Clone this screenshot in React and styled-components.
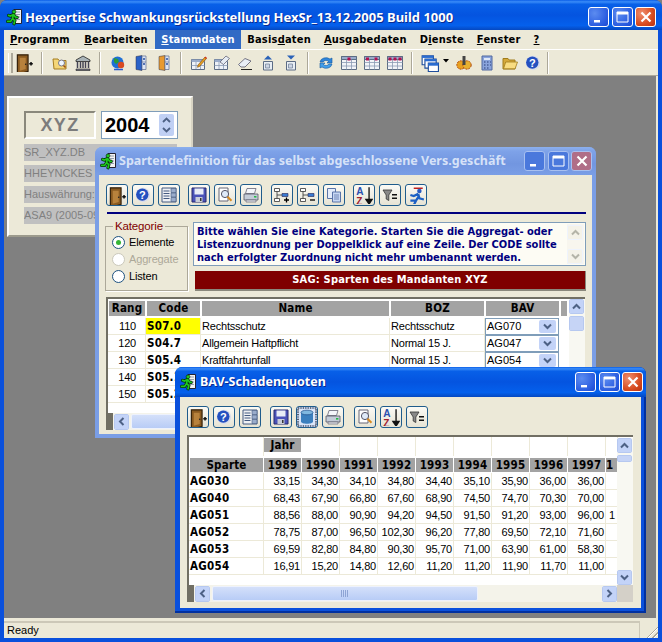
import React from "react";
import styled, { createGlobalStyle } from "styled-components";

const Global = createGlobalStyle`
  html, body { margin: 0; padding: 0; background: #808080; }
  * { box-sizing: border-box; }
`;
const UI = `"Liberation Sans", Arial, sans-serif`;
const BOLD = `"DejaVu Sans", Verdana, sans-serif`;

const Root = styled.div`
  width: 662px; height: 642px; display: flex; flex-direction: column; overflow: hidden;
  background: #0a50dc; padding: 0 4px 4px; border-radius: 7px 7px 0 0; font-family: ${UI};
`;
const TitleBar = styled.div`
  display: flex; align-items: center; flex: none; height: ${p => p.$h}px; margin: 0 ${p => p.$mx}px;
  padding: ${p => p.$pad};
  background: ${p => p.$active
    ? "linear-gradient(180deg,#0a5ee8 0,#3a8cf8 6%,#0860e8 14%,#0454e0 50%,#0460ec 85%,#0548c0 100%)"
    : "linear-gradient(180deg,#8cb0ee 0,#7ea2e8 15%,#7296e0 60%,#7a9ee6 100%)"};
  color: ${p => p.$active ? "#fff" : "#d6e2f8"};
  border-radius: 7px 7px 0 0;
`;
const TitleText = styled.span`
  flex: 1; margin-left: ${p => p.$ml || 4}px; font: bold ${p => p.$size}px/1 "Noto Sans", sans-serif;
  white-space: nowrap; text-shadow: ${p => p.$active ? "1px 1px 0 #0a2a90" : "none"};
`;
const CaptionBtn = styled.div`
  width: 21px; height: 20px; margin-left: 2.5px; border-radius: 3px; display: flex; align-items: center; justify-content: center;
  border: 1px solid ${p => p.$active ? "#fff" : "#a8c0f0"};
  background: ${p => p.$close
    ? (p.$active ? "radial-gradient(circle at 30% 30%,#f09070,#d84c20 60%,#b83010)" : "#b06e88")
    : (p.$active ? "radial-gradient(circle at 30% 30%,#5c8cf0,#2a5ce0 70%,#1c48d0)" : "#4a78dc")};
`;
const MenuBar = styled.div`
  display: flex; flex: none; height: 20px; background: #ece9d8; border-bottom: 1px solid #fff; padding-left: 0;
`;
const MenuItem = styled.div`
  padding: 0 ${p => p.$px ?? 6.5}px; height: 19px; font: bold 11px/19px ${BOLD}; font-stretch: condensed; letter-spacing: .2px; color: ${p => p.$on ? "#fff" : "#000"};
  background: ${p => p.$on ? "#316ac5" : "transparent"}; white-space: nowrap; margin-right: ${p => p.$mr || 0}px;
`;
const ToolBar = styled.div`
  display: flex; align-items: center; flex: none; height: 26px; background: #ece9d8; border-bottom: 1px solid #aca899; padding-left: 4px;
`;
const Grip = styled.div`
  width: 5px; height: 20px; flex: none; border-left: 1px solid #fff; border-right: 2px solid #aca899;
`;
const Sep = styled.div`
  width: 2px; height: 22px; flex: none; border-left: 1px solid #aca899; border-right: 1px solid #fff; margin: 0 ${p => p.$m ?? 5}px;
`;
const Slot = styled.div`
  width: 23px; height: 22px; flex: none; display: flex; align-items: center; justify-content: center;
`;
const CaretSlot = styled.div` flex: none; margin: 0 3px 4px 2px; `;
const Mdi = styled.div`
  position: relative; flex: 1; background: #808080; border-right: 2px solid #ece9d8; overflow: hidden;
`;
const StatusBar = styled.div`
  flex: none; height: 20px; background: #ece9d8; padding-top: 3px; position: relative;
`;
const StatusPane = styled.div`
  width: 636px; height: 17px; border-top: 2px solid #ccc8b8; border-right: 1px solid #ccc8b8; font: 11px/15px ${UI}; padding-left: 3px; color: #000;
`;
const SizeGrip = styled.div`
  position: absolute; right: 0; bottom: 0; width: 13px; height: 13px;
  background: repeating-linear-gradient(135deg, transparent 0 2px, #aca899 2px 3px, #fff 3px 4px);
  clip-path: polygon(100% 0, 100% 100%, 0 100%);
`;
const Backdrop = styled.div`
  position: absolute; left: 3px; top: 20px; width: 186px; height: 141px; background: #ece9d8;
  border: 2px solid #fff; border-right-color: #d8d4c4; border-bottom-color: #9c9a8c;
  padding: 13px 0 0 15px; display: flex; flex-direction: column;
`;
const TopRow = styled.div` display: flex; gap: 5px; margin-bottom: 5px; `;
const CodeBox = styled.div`
  width: 72px; height: 28px; border: 2px solid #8a887c; border-right-color: #fff; border-bottom-color: #fff;
  color: #7c7c7c; font: bold 18px/24px ${UI}; text-align: center; letter-spacing: 1.4px;
`;
const YearBox = styled.div`
  width: 77px; height: 28px; background: #fff; border: 1px solid #7f9db9; display: flex; align-items: center; justify-content: space-between; padding: 2px 2px 2px 3px;
  font: bold 20px/1 ${UI}; color: #000;
`;
const SpinWrap = styled.div`
  width: 15px; height: 22px; background: #c0d0f4; border-radius: 2px; display: flex; align-items: center; justify-content: center; margin-right: 1px;
`;
const Field = styled.div`
  width: 153px; height: 17px; background: #c0c0c0; color: #808080; font: 11px/17px ${UI}; margin-bottom: 4px; white-space: nowrap; overflow: hidden;
`;
const Win = styled.div`
  position: absolute; left: ${p => p.$x}px; top: ${p => p.$y}px; width: ${p => p.$w}px; height: ${p => p.$h}px;
  background: ${p => p.$active ? "#0a50dc" : "#7a9ee6"}; padding: 0 ${p => p.$active ? 5 : 4}px ${p => p.$active ? 5 : 4}px;
  border-radius: 7px 7px 0 0; display: flex; flex-direction: column; box-shadow: ${p => p.$active ? "inset -2px -2px 0 #0030a0" : "none"};
`;
const WinBody = styled.div`
  flex: 1; background: #ece9d8; display: flex; flex-direction: column; padding: ${p => p.$pad}; min-height: 0;
`;
const BtnRow = styled.div` display: flex; gap: 4px; flex: none; margin-left: ${p => p.$ml || 0}px; `;
const TBtn = styled.div`
  width: 22px; height: 22px; flex: none; border: 1px solid #1f5c8c; border-radius: 3px;
  background: ${p => p.$on ? "#dbe5f8" : "linear-gradient(180deg,#fbfaf5,#e6e3d4)"};
  display: flex; align-items: center; justify-content: center; margin-left: ${p => p.$gap || 0}px;
  box-shadow: ${p => p.$on ? "inset 0 0 0 2px #c4d4f4" : "none"};
`;
const Rule = styled.div` height: 2px; background: #00007f; margin: 6px 6px 8px 8px; flex: none; `;
const TopSplit = styled.div` display: flex; flex: none; margin-left: 6px; gap: 5px; `;
const Group = styled.fieldset`
  width: 83px; height: 71px; margin: -2px 0 0; padding: 2px 0 0 6px; border: 1px solid #aca899; box-shadow: 1px 1px 0 #fff;
  font: 11px/17px ${UI}; letter-spacing: -.15px; color: #000;
`;
const GroupLegend = styled.legend`
  color: #7f0000; padding: 0 2px; margin-left: 1px; font: 11.5px/12px ${UI};
`;
const RadioRow = styled.div` display: flex; align-items: center; gap: 4px; height: 17px; color: ${p => p.$off ? "#aca899" : "#000"}; `;
const Radio = styled.span`
  width: 13px; height: 13px; border-radius: 50%; flex: none; background: #fff; border: 1px solid ${p => p.$off ? "#cac8bb" : "#1c5180"};
  display: flex; align-items: center; justify-content: center;
  &::after { content: ""; width: 5px; height: 5px; border-radius: 50%; background: ${p => p.$dot ? "#35b535" : "transparent"}; }
`;
const InfoCol = styled.div` width: 393px; display: flex; flex-direction: column; gap: 5px; `;
const Info = styled.div`
  height: 44px; background: #fdfcf4; border: 1px solid #7f9db9; padding: 2px 0 0 3px; position: relative;
  font: bold 11px/13px ${BOLD}; font-stretch: condensed; color: #00007f; white-space: nowrap;
`;
const InfoScroll = styled.div`
  position: absolute; right: 1px; top: 1px; bottom: 1px; width: 17px; display: flex; flex-direction: column; justify-content: space-between; background: #f8f6ee; padding-top: 1px;
`;
const SagBar = styled.div`
  height: 20px; margin-left: 2px; background: #7f0000; border-right: 1px solid #8a887c; border-bottom: 2px solid #8a887c; color: #fff; text-align: center; font: bold 11px/18px ${BOLD}; font-stretch: condensed; letter-spacing: .2px;
`;
const TableFrame = styled.div`
  position: relative; flex: none; width: ${p => p.$w}px; height: ${p => p.$h}px; margin-left: ${p => p.$ml}px; margin-top: ${p => p.$mt}px;
  background: #fff; border-top: 2px solid #716f64; border-left: 2px solid #716f64; overflow: hidden;
`;
const GridRow = styled.div`
  display: grid; grid-template-columns: ${p => p.$cols}; height: ${p => p.$h || 17}px; width: max-content; margin-top: ${p => p.$mt || 0}px;
`;
const Head = styled.div`
  margin: ${p => p.$m || "0 1px 2px"}; background: #a3a3a3; font: bold 11.5px/14px ${BOLD}; font-stretch: condensed; letter-spacing: .2px; color: ${p => p.$hide ? "transparent" : "#000"}; text-align: ${p => p.$left ? "left" : "center"}; overflow: hidden; white-space: nowrap;
`;
const Blank = styled.div` border-right: 1px solid #ece9d8; `;
const Cell = styled.div`
  border-right: 1px solid #ece9d8; border-bottom: 1px solid #ece9d8; font: 11px/16px ${UI}; letter-spacing: -.2px; color: #000; white-space: nowrap; overflow: hidden;
  padding: 0 ${p => p.$pr ?? 2}px 0 ${p => p.$pl ?? 2}px; text-align: ${p => p.$right ? "right" : "left"};
`;
const CodeCell = styled(Cell)`
  font: bold 11.5px/16px ${BOLD}; font-stretch: condensed; letter-spacing: .25px; background: ${p => p.$hl ? "#ffff00" : "transparent"};
`;
const Combo = styled.div`
  margin: 0 1px 0 0; height: 17px; border: 1px solid #7f9db9; background: #fff; display: flex; align-items: center; justify-content: space-between;
  font: 11px/15px ${UI}; padding: 0 2px 0 1px;
`;
const ArrowBtn = styled.div`
  width: ${p => p.$w || 15}px; height: ${p => p.$h || 15}px; flex: none; border-radius: 2px; background: ${p => p.$pale ? "#f4f2e8" : "#c3d3f8"}; border: ${p => p.$flat ? "none" : "1px solid #eef3fd"};
  outline: ${p => p.$flat || p.$pale ? "none" : "1px solid #b6c8f0"}; outline-offset: -1px;
  display: flex; align-items: center; justify-content: center;
`;
const VScroll = styled.div`
  position: absolute; right: 0; top: ${p => p.$top}px; bottom: ${p => p.$bottom}px; width: 16px; background: #f8f8f2; display: flex; flex-direction: column; gap: 2px;
`;
const VThumb = styled.div` height: ${p => p.$h}px; width: 15px; background: #c6d4f6; border: 1px solid #eef2fc; outline: 1px solid #b6c8f0; outline-offset: -1px; border-radius: 2px; flex: none; `;
const HScroll = styled.div`
  position: absolute; left: 0; bottom: 0; right: ${p => p.$right}px; height: 17px; background: #f4f3ea; display: flex; align-items: center; gap: 2px;
`;
const DarkSq = styled.div` width: 5px; height: 17px; background: #716f64; flex: none; margin-right: -1px; `;
const HThumb = styled.div`
  width: ${p => p.$w}px; height: 15px; flex: none; background: linear-gradient(180deg,#d4e0fa,#b8ccf6); border: 1px solid #eef2fc; border-radius: 2px; display: flex; align-items: center; justify-content: center;
`;
const Spacer = styled.div` flex: 1; `;
const Corner = styled.div` position: absolute; right: 0; bottom: 0; width: 16px; height: 17px; background: #d4d0c8; `;

/* ---------- icons ---------- */
const S = ({ size = 16, children }) => <svg width={size} height={size} viewBox="0 0 16 16" style={{ display: "block", flex: "none" }}>{children}</svg>;
const Chev = ({ up, c = "#4d6185", size = 9 }) => (
  <svg width={size} height={size} viewBox="0 0 9 9" style={{ display: "block" }}>
    <path d={up ? "M1 6.5 L4.5 3 L8 6.5" : "M1 2.5 L4.5 6 L8 2.5"} fill="none" stroke={c} strokeWidth="2" />
  </svg>
);
const ChevH = ({ right }) => (
  <svg width="9" height="9" viewBox="0 0 9 9" style={{ display: "block" }}>
    <path d={right ? "M2.5 1 L6 4.5 L2.5 8" : "M6.5 1 L3 4.5 L6.5 8"} fill="none" stroke="#4d6185" strokeWidth="2" />
  </svg>
);
const AppIcon = () => (
  <svg width="17" height="18" viewBox="0 0 17 18" style={{ display: "block", flex: "none" }}>
    <path d="M8 1.5h7.5v14H8z" fill="#f2f2f2" stroke="#223" strokeWidth="1" />
    <path d="M10 4h4M10 6.5h4M10 9h4M10 11.5h4" stroke="#8a94a8" strokeWidth=".9" />
    <g fill="none" stroke="#04300a" strokeWidth="3.2" strokeLinecap="round">
      <path d="M7.6 6.4 L4.4 8 L2.6 7.4 M7.6 6.4 L9.4 9 L11.2 9.4 M7.2 6.6 L6.6 10.6 L8.8 12.6 L8 15.8 M6.6 10.6 L4.6 13.4 L1.6 13.4" />
    </g>
    <g fill="none" stroke="#1ec81e" strokeWidth="1.7" strokeLinecap="round">
      <path d="M7.6 6.4 L4.4 8 L2.6 7.4 M7.6 6.4 L9.4 9 L11.2 9.4 M7.2 6.6 L6.6 10.6 L8.8 12.6 L8 15.8 M6.6 10.6 L4.6 13.4 L1.6 13.4" />
    </g>
    <circle cx="8" cy="3.8" r="1.9" fill="#1ec81e" stroke="#04300a" strokeWidth=".7" />
  </svg>
);
const Door = () => (
  <S size={19}>
    <path d="M2 1.5h9v14l-9 2.5z" fill="#8a5a20" stroke="#33210a" strokeWidth="1" />
    <path d="M4 4h5v9.5l-5 1.5z" fill="#b8823c" />
    <circle cx="9" cy="9.5" r=".7" fill="#222" />
    <path d="M12 9h3M13.5 7.5v3" stroke="#111" strokeWidth="1.3" />
  </S>
);
const FolderSearch = () => (
  <S><path d="M1 4h5l1 1.5h7V14H2z" fill="#f4d678" stroke="#a47c20" /><circle cx="9.5" cy="8" r="3" fill="#eef6ff" stroke="#778" /><path d="M11.5 10.5l2 2" stroke="#a05010" strokeWidth="1.6" /></S>
);
const Bank = () => (
  <S><path d="M8 1L1 5v1.5h14V5z" fill="#aab4b8" stroke="#222" strokeWidth=".8" /><path d="M2.5 7v6M5.5 7v6M8 7v6M10.5 7v6M13.5 7v6" stroke="#445" strokeWidth="1.5" /><path d="M1 14h14v1.5H1z" fill="#778" stroke="#222" strokeWidth=".6" /></S>
);
const Globe = () => (
  <S><circle cx="7.5" cy="7.5" r="6" fill="#1f6fd6" /><path d="M4 3l4 1 1 3-3 2-2-2zM10 9l3 0-2 4z" fill="#2c9a3a" /><circle cx="11" cy="10" r="3.2" fill="#d84a20" /><path d="M4 14.5h9" stroke="#2a5ad0" strokeWidth="1.4" /></S>
);
const Cabinet = ({ c }) => (
  <S><path d="M3 1.5l6-1v15l-6-1z" fill={c} stroke="#334" strokeWidth=".5" /><path d="M9 1h4v13.5H9z" fill="#dfe6f4" stroke="#5a6a90" strokeWidth=".7" /><path d="M10 4h2M10 9h2" stroke="#2850a0" strokeWidth="1.4" /><path d="M9 7h4" stroke="#5a6a90" strokeWidth=".6" /></S>
);
const GridPlain = ({ cols = [] }) => (
  <S>
    <path d="M.5 1.5h15v13H.5z" fill="#f2f4f8" stroke="#5c6c84" />
    <path d="M.5 1.5h15v3H.5z" fill="#9aaccb" stroke="#5c6c84" />
    {cols.map((x, i) => <path key={i} d={`M${x} 2.5h3v3h-3z`} fill="#b01050" />)}
    <path d="M5.5 4.5v10M10.5 4.5v10M.5 7.5h15M.5 11h15" stroke="#8a9ab4" strokeWidth=".8" />
  </S>
);
const NotePencil = () => (
  <S>
    <path d="M.5 4.5h13v10H.5z" fill="#eef2f8" stroke="#5c6c84" /><path d="M.5 4.5h13v2.5H.5z" fill="#9aaccb" />
    <path d="M5 7v7M9.5 7v7M.5 10.5h13" stroke="#8a9ab4" strokeWidth=".8" />
    <path d="M7 10l7-8 1.5 1.5-7 8-2 .8z" fill="#e8a020" stroke="#7a4a10" strokeWidth=".6" /><path d="M14 2l1.5 1.5" stroke="#d03020" strokeWidth="1.4" />
  </S>
);
const TableErase = () => (
  <S>
    <path d="M.5 4.5h13v10H.5z" fill="#eef2f8" stroke="#5c6c84" /><path d="M.5 4.5h13v2.5H.5z" fill="#9aaccb" />
    <path d="M5 7v7M9.5 7v7M.5 10.5h13" stroke="#8a9ab4" strokeWidth=".8" />
    <path d="M6 7l6-6 3.5 2.5-6 6z" fill="#e6ecf4" stroke="#667" strokeWidth=".8" />
  </S>
);
const Eraser = () => (
  <S><path d="M1.5 9.5L8 3.5l6 2.5-6 6H4z" fill="#e8eef6" stroke="#667" strokeWidth=".9" /><path d="M4 14.5h11" stroke="#222" strokeWidth="1.1" /></S>
);
const DocArrow = ({ up }) => (
  <S>
    <path d="M3.5 6.5h9v8.5h-9z" fill="#e8eef4" stroke="#5c6c84" /><path d="M5.5 9h4v4h-4z" fill="#cdd6e4" stroke="#6a7a94" strokeWidth=".7" />
    <path d={up ? "M8 .5L12 4.5H4z" : "M4 .5h8L8 4.5z"} fill="#2a62b8" />
  </S>
);
const Refresh = () => (
  <S><path d="M2 7a6 5 0 0 1 10-3l2-1v5h-5l1.6-1.5A3.6 3.4 0 0 0 5 7z" fill="#2f86dc" stroke="#14589c" strokeWidth=".6" /><path d="M14 9a6 5 0 0 1-10 3l-2 1V8h5L5.4 9.5A3.6 3.4 0 0 0 11 9z" fill="#44a0ec" stroke="#14589c" strokeWidth=".6" /></S>
);
const Windows = () => (
  <S size={18}>
    <path d="M1 1.5h10v8H1z" fill="#fff" stroke="#1f4e9c" /><path d="M1 1.5h10v2H1z" fill="#2a6cd0" />
    <path d="M3.5 4.5h10v8h-10z" fill="#fff" stroke="#1f4e9c" /><path d="M3.5 4.5h10v2h-10z" fill="#2a6cd0" />
    <path d="M6.5 8h9v7.5H6.5z" fill="#fff" stroke="#1f4e9c" /><path d="M6.5 8h9v2.4H6.5z" fill="#2a6cd0" />
  </S>
);
const Caret = () => <svg width="6" height="4" viewBox="0 0 6 4" style={{ display: "block" }}><path d="M0 0h6L3 3.5z" fill="#000" /></svg>;
const Gears = () => (
  <S><circle cx="5" cy="10" r="4.2" fill="#e8a020" stroke="#b04810" strokeDasharray="2 1" /><circle cx="11" cy="10" r="4.2" fill="#e8b030" stroke="#b04810" strokeDasharray="2 1" /><path d="M6.5 1h3v9h-3z" fill="#444" /></S>
);
const Calc = () => (
  <S><path d="M3 1h10v14H3z" fill="#8aa4dc" stroke="#5068a0" /><path d="M5 3h6v2H5z" fill="#dfe8f8" /><path d="M5 7h1.5M8 7h1.5M11 7h1M5 10h1.5M8 10h1.5M11 10h1M5 13h1.5M8 13h1.5" stroke="#2a3f78" strokeWidth="1.2" /></S>
);
const Folder = () => (
  <S><path d="M1 3.5h5l1.2 1.5H13v9H1z" fill="#d4a83a" stroke="#a07c1c" /><path d="M1.5 13.8l2.2-6.8H15.5l-2.4 6.8z" fill="#f8dc80" stroke="#a07c1c" strokeWidth=".8" /></S>
);
const Help = ({ size = 16 }) => (
  <svg width={size} height={size} viewBox="0 0 16 16" style={{ display: "block", flex: "none" }}>
    <circle cx="8" cy="8" r="7.2" fill="#d8dcea" /><circle cx="7.3" cy="7.6" r="6.2" fill="#2450c0" />
    <text x="7.3" y="11.6" textAnchor="middle" fontFamily="Liberation Sans" fontWeight="bold" fontSize="11" fill="#fff">?</text>
  </svg>
);
const Columns = () => (
  <S><path d="M1 1h14v14H1z" fill="#eef0f4" stroke="#445a80" /><path d="M2.5 4h6M2.5 6.5h6M2.5 9h6M2.5 11.5h6" stroke="#445a80" strokeWidth="1" /><path d="M10 1.5h5v4h-5zM10 6h5v4h-5zM10 10.5h5v4h-5z" fill="#9aaccb" stroke="#445a80" strokeWidth=".6" /></S>
);
const Floppy = () => (
  <S><path d="M1 1h14v14H1z" fill="#4a52b8" stroke="#26286c" /><path d="M3.5 1.5h9v6h-9z" fill="#e8ecf6" /><path d="M4.5 10h7v5h-7z" fill="#c8ccd8" /><path d="M9 11h1.5v3H9z" fill="#333" /></S>
);
const Preview = () => (
  <S><path d="M2 1h9v13H2z" fill="#fff" stroke="#667" /><circle cx="8" cy="7" r="3.6" fill="#dfeaf8" stroke="#556" /><path d="M10.5 9.8l4 4" stroke="#d88a20" strokeWidth="2" /></S>
);
const Printer = () => (
  <S><path d="M4 1.5h9l-1.5 5h-9z" fill="#f4f6fa" stroke="#667" strokeWidth=".8" /><path d="M1 7h14v6H1z" fill="#c4ccd8" stroke="#556" strokeWidth=".8" /><path d="M3 13h10v2H3z" fill="#e8eaee" stroke="#667" strokeWidth=".7" /><path d="M11 9h2.4v1.6H11z" fill="#22bb44" /></S>
);
const TreeAdd = ({ minus }) => (
  <S>
    <path d="M.5 1.5h5v3h-5zM.5 11.5h5v3h-5z" fill="#fff" stroke="#333" strokeWidth=".8" /><path d="M8 6.5h6v3H8z" fill="#3a7ad0" stroke="#225" strokeWidth=".6" />
    <path d="M3 4.5v7M3 8h5" stroke="#333" strokeWidth=".8" />
    <path d={minus ? "M10 13h5" : "M10 13h5M12.5 10.5v5"} stroke="#000" strokeWidth="1.3" />
  </S>
);
const Copy = () => (
  <S><path d="M1.5 1.5h8v10h-8z" fill="#e4ecfa" stroke="#5a74a8" /><path d="M6.5 5h8v10h-8z" fill="#c8d8f4" stroke="#5a74a8" /><path d="M8 8h5M8 10h5M8 12h5" stroke="#5a74a8" strokeWidth=".8" /></S>
);
const Sort = () => (
  <S size={18}>
    <text x="1" y="8" fontFamily="Liberation Sans" fontWeight="bold" fontSize="9" fill="#2a50b0">A</text>
    <text x="1" y="17" fontFamily="Liberation Sans" fontWeight="bold" fontSize="9" fill="#a02030">Z</text>
    <path d="M12.5 1v14M9.8 12l2.7 4 2.7-4z" stroke="#111" strokeWidth="1.2" fill="#111" />
  </S>
);
const Filter = () => (
  <S><path d="M1 3h9L6.8 8v5.5L4.2 12V8z" fill="#888" stroke="#333" strokeWidth=".8" /><path d="M10 7h5v1.6h-5zM10 10.4h5V12h-5z" fill="#111" /></S>
);
const Runner = () => (
  <S size={18}>
    <path d="M6 2h8" stroke="#c02020" strokeWidth="1.3" />
    <circle cx="11" cy="4.5" r="2" fill="#2a5cc0" />
    <path d="M10 7L6 9 3 8M10 7l1 4 4 1M10.5 9L8 13l-2 4M8 13l-5 0" fill="none" stroke="#1c60c4" strokeWidth="2" />
  </S>
);
const Db = () => (
  <svg width="20" height="20" viewBox="0 0 20 20" style={{ display: "block" }}>
    <rect x="1" y="1" width="18" height="18" fill="none" stroke="#111" strokeWidth="1.2" strokeDasharray="1.2 1.2" />
    <path d="M4 5.5v9c0 3 12 3 12 0v-9z" fill="#3b7fbe" />
    <ellipse cx="10" cy="5.5" rx="6" ry="2.3" fill="#80b8e0" stroke="#1c4c88" strokeWidth=".7" />
  </svg>
);
const Spin = () => <svg width="11" height="18" viewBox="0 0 11 18" style={{ display: "block" }}><path d="M2 6l3.5-3.5L9 6M2 12l3.5 3.5L9 12" fill="none" stroke="#4d6185" strokeWidth="1.8" /></svg>;
const ThumbLines = () => <svg width="8" height="7" viewBox="0 0 8 7" style={{ display: "block" }}><path d="M.5 0v7M2.5 0v7M4.5 0v7M6.5 0v7" stroke="#8ea4d4" /></svg>;
const Min = ({ c = "#fff" }) => <svg width="11" height="11" viewBox="0 0 11 11" style={{ display: "block" }}><path d="M1 8h6v2.4H1z" fill={c} /></svg>;
const Max = ({ c = "#fff" }) => <svg width="13" height="12" viewBox="0 0 13 12" style={{ display: "block" }}><path d="M1 1h11v10H1z" fill="none" stroke={c} /><path d="M1 1h11v2.4H1z" fill={c} /></svg>;
const X = ({ c = "#fff" }) => <svg width="12" height="12" viewBox="0 0 12 12" style={{ display: "block" }}><path d="M1.5 1.5l9 9M10.5 1.5l-9 9" stroke={c} strokeWidth="2.2" /></svg>;

const Caption = ({ active }) => (
  <>
    <CaptionBtn $active={active}><Min /></CaptionBtn>
    <CaptionBtn $active={active}><Max /></CaptionBtn>
    <CaptionBtn $active={active} $close><X /></CaptionBtn>
  </>
);

const menus = [
  [<><u>P</u>rogramm</>, 6, 2], [<><u>B</u>earbeiten</>, 6.5, 1], [<><u>S</u>tammdaten</>, 6, 0, true], [<>Basis<u>d</u>aten</>, 6.5, 0],
  [<><u>A</u>usgabedaten</>, 6.5, 0], [<>D<u>i</u>enste</>, 6.5, 0], [<><u>F</u>enster</>, 6.5, 0], [<><u>?</u></>, 6.5, 0],
];

const spRows = [
  ["110", "S07.0", "Rechtsschutz", "Rechtsschutz", "AG070", true],
  ["120", "S04.7", "Allgemein Haftpflicht", "Normal 15 J.", "AG047"],
  ["130", "S05.4", "Kraftfahrtunfall", "Normal 15 J.", "AG054"],
  ["140", "S05.1", "Kraftfahrt Haftpflicht", "Normal 15 J.", "AG051"],
  ["150", "S05.2", "Kraftfahrt Kasko", "Normal 15 J.", "AG052"],
];
const spCols = "38px 55px 189px 95px 75px 8px";

const years = ["1989", "1990", "1991", "1992", "1993", "1994", "1995", "1996", "1997"];
const bavRows = [
  ["AG030", "33,15", "34,30", "34,10", "34,80", "34,40", "35,10", "35,90", "36,00", "36,00", ""],
  ["AG040", "68,43", "67,90", "66,80", "67,60", "68,90", "74,50", "74,70", "70,30", "70,00", ""],
  ["AG051", "88,56", "88,00", "90,90", "94,20", "94,50", "91,50", "91,20", "93,00", "96,00", "1"],
  ["AG052", "78,75", "87,00", "96,50", "102,30", "96,20", "77,80", "69,50", "72,10", "71,60", ""],
  ["AG053", "69,59", "82,80", "84,80", "90,30", "95,70", "71,00", "63,90", "61,00", "58,30", ""],
  ["AG054", "16,91", "15,20", "14,80", "12,60", "11,20", "11,20", "11,90", "11,70", "11,00", ""],
];
const bavCols = "75px repeat(9, 38px) 12px";

export default function App() {
  return (
    <Root>
      <Global />
      <TitleBar $h={30} $mx={-4} $active $pad="4px 6px 0 6px">
        <AppIcon />
        <TitleText $active $size={13} $ml={2}>Hexpertise Schwankungsrückstellung HexSr_13.12.2005 Build 1000</TitleText>
        <Caption active />
      </TitleBar>
      <MenuBar>
        {menus.map(([t, px, mr, on], i) => <MenuItem key={i} $px={px} $mr={mr} $on={on}>{t}</MenuItem>)}
      </MenuBar>
      <ToolBar>
        <Grip />
        <Slot><Door /></Slot>
        <Sep />
        <Slot><FolderSearch /></Slot><Slot><Bank /></Slot>
        <Sep />
        <Slot><Globe /></Slot><Slot><Cabinet c="#2a62c8" /></Slot><Slot><Cabinet c="#e89a30" /></Slot>
        <Sep />
        <Slot><NotePencil /></Slot><Slot><TableErase /></Slot><Slot><Eraser /></Slot><Slot><DocArrow up /></Slot><Slot><DocArrow /></Slot>
        <Sep />
        <Slot><Refresh /></Slot><Slot><GridPlain cols={[6.5]} /></Slot><Slot><GridPlain cols={[2, 10.5]} /></Slot><Slot><GridPlain cols={[1.5, 6.5, 11.5]} /></Slot>
        <Sep />
        <Slot><Windows /></Slot><CaretSlot><Caret /></CaretSlot>
        <Slot><Gears /></Slot><Slot><Calc /></Slot><Slot><Folder /></Slot><Slot><Help /></Slot>
        <Sep $m={3} />
      </ToolBar>
      <Mdi>
        <Backdrop>
          <TopRow>
            <CodeBox>XYZ</CodeBox>
            <YearBox>2004<SpinWrap><Spin /></SpinWrap></YearBox>
          </TopRow>
          <Field>SR_XYZ.DB</Field>
          <Field>HHEYNCKES</Field>
          <Field>Hauswährung: EUR</Field>
          <Field>ASA9 (2005-09-30)</Field>
        </Backdrop>

        <Win $x={91} $y={71} $w={501} $h={291}>
          <TitleBar $h={28} $mx={-4} $pad="0 4px 0 5px">
            <AppIcon />
            <TitleText $size={12.5} $ml={2}>Spartendefinition für das selbst abgeschlossene Vers.geschäft</TitleText>
            <Caption />
          </TitleBar>
          <WinBody $pad="9px 0 0 0">
            <BtnRow $ml={7}>
              <TBtn><Door /></TBtn><TBtn><Help /></TBtn><TBtn><Columns /></TBtn>
              <TBtn $gap={4}><Floppy /></TBtn><TBtn><Preview /></TBtn><TBtn><Printer /></TBtn>
              <TBtn $gap={5}><TreeAdd /></TBtn><TBtn><TreeAdd minus /></TBtn><TBtn><Copy /></TBtn>
              <TBtn $gap={4}><Sort /></TBtn><TBtn><Filter /></TBtn><TBtn><Runner /></TBtn>
            </BtnRow>
            <Rule />
            <TopSplit>
              <Group>
                <GroupLegend>Kategorie</GroupLegend>
                <RadioRow><Radio $dot />Elemente</RadioRow>
                <RadioRow $off><Radio $off />Aggregate</RadioRow>
                <RadioRow><Radio />Listen</RadioRow>
              </Group>
              <InfoCol>
                <Info>
                  Bitte wählen Sie eine Kategorie. Starten Sie die Aggregat- oder<br />
                  Listenzuordnung per Doppelklick auf eine Zeile. Der CODE sollte<br />
                  nach erfolgter Zuordnung nicht mehr umbenannt werden.
                  <InfoScroll>
                    <ArrowBtn $pale $w={16} $h={15}><Chev up c="#b4b4a8" /></ArrowBtn>
                    <ArrowBtn $pale $w={16} $h={15}><Chev c="#b4b4a8" /></ArrowBtn>
                  </InfoScroll>
                </Info>
                <SagBar>SAG: Sparten des Mandanten XYZ</SagBar>
              </InfoCol>
            </TopSplit>
            <TableFrame $w={479} $h={133} $ml={7} $mt={6}>
              <GridRow $cols={spCols} $mt={2} $h={17}>
                <Head>Rang</Head><Head>Code</Head><Head>Name</Head><Head>BOZ</Head><Head>BAV</Head><Head $hide>.</Head>
              </GridRow>
              {spRows.map(r => (
                <GridRow key={r[0]} $cols={spCols}>
                  <Cell $right $pr={9}>{r[0]}</Cell>
                  <CodeCell $hl={r[5]} $pl={1}>{r[1]}</CodeCell>
                  <Cell $pl={1}>{r[2]}</Cell>
                  <Cell $pl={1}>{r[3]}</Cell>
                  <Combo>{r[4]}<ArrowBtn $flat $w={17} $h={13}><Chev size={9} /></ArrowBtn></Combo>
                  <div />
                </GridRow>
              ))}
              <VScroll $top={0} $bottom={17}>
                <ArrowBtn $w={15} $h={15}><Chev up /></ArrowBtn>
                <VThumb $h={15} />
              </VScroll>
              <HScroll $right={16}>
                <DarkSq />
                <ArrowBtn $w={15} $h={16}><ChevH /></ArrowBtn>
                <HThumb $w={220} />
              </HScroll>
            </TableFrame>
          </WinBody>
        </Win>

        <Win $active $x={171} $y={291} $w={471} $h={246}>
          <TitleBar $active $h={30} $mx={-5} $pad="0 3px 0 5px">
            <AppIcon />
            <TitleText $active $size={12.5} $ml={3}>BAV-Schadenquoten</TitleText>
            <Caption active />
          </TitleBar>
          <WinBody $pad="9px 0 0 7px">
            <BtnRow>
              <TBtn><Door /></TBtn><TBtn><Help /></TBtn><TBtn><Columns /></TBtn>
              <TBtn $gap={5}><Floppy /></TBtn><TBtn $on><Db /></TBtn><TBtn><Printer /></TBtn>
              <TBtn $gap={6}><Preview /></TBtn><TBtn><Sort /></TBtn><TBtn><Filter /></TBtn>
            </BtnRow>
            <TableFrame $w={446} $h={167} $ml={0} $mt={7}>
              <GridRow $cols={bavCols} $h={19}>
                <Blank /><Head $m="1px 1px 4px 0">Jahr</Head>
                {Array.from({ length: 9 }).map((_, i) => <Blank key={i} />)}
              </GridRow>
              <GridRow $cols={bavCols} $h={17}>
                <Head $m="2px 1px 1px">Sparte</Head>
                {years.map(y => <Head key={y} $m="2px 1px 1px 0">{y}</Head>)}
                <Head $m="2px 0 1px 0" $left>1</Head>
              </GridRow>
              {bavRows.map(r => (
                <GridRow key={r[0]} $cols={bavCols}>
                  <CodeCell $pl={1}>{r[0]}</CodeCell>
                  {r.slice(1).map((v, i) => i === 9
                    ? <Cell key={i} $pl={3} $pr={0}>{v}</Cell>
                    : <Cell key={i} $right $pr={1} $pl={0}>{v}</Cell>)}
                </GridRow>
              ))}
              <VScroll $top={1} $bottom={17}>
                <ArrowBtn $w={15} $h={15}><Chev up /></ArrowBtn>
                <VThumb $h={7} />
                <Spacer />
                <ArrowBtn $w={15} $h={15}><Chev /></ArrowBtn>
              </VScroll>
              <HScroll $right={16}>
                <DarkSq />
                <ArrowBtn $w={15} $h={16}><ChevH /></ArrowBtn>
                <HThumb $w={266}><ThumbLines /></HThumb>
                <Spacer />
                <ArrowBtn $w={15} $h={16}><ChevH right /></ArrowBtn>
              </HScroll>
              <Corner />
            </TableFrame>
          </WinBody>
        </Win>
      </Mdi>
      <StatusBar><StatusPane>Ready</StatusPane><SizeGrip /></StatusBar>
    </Root>
  );
}
